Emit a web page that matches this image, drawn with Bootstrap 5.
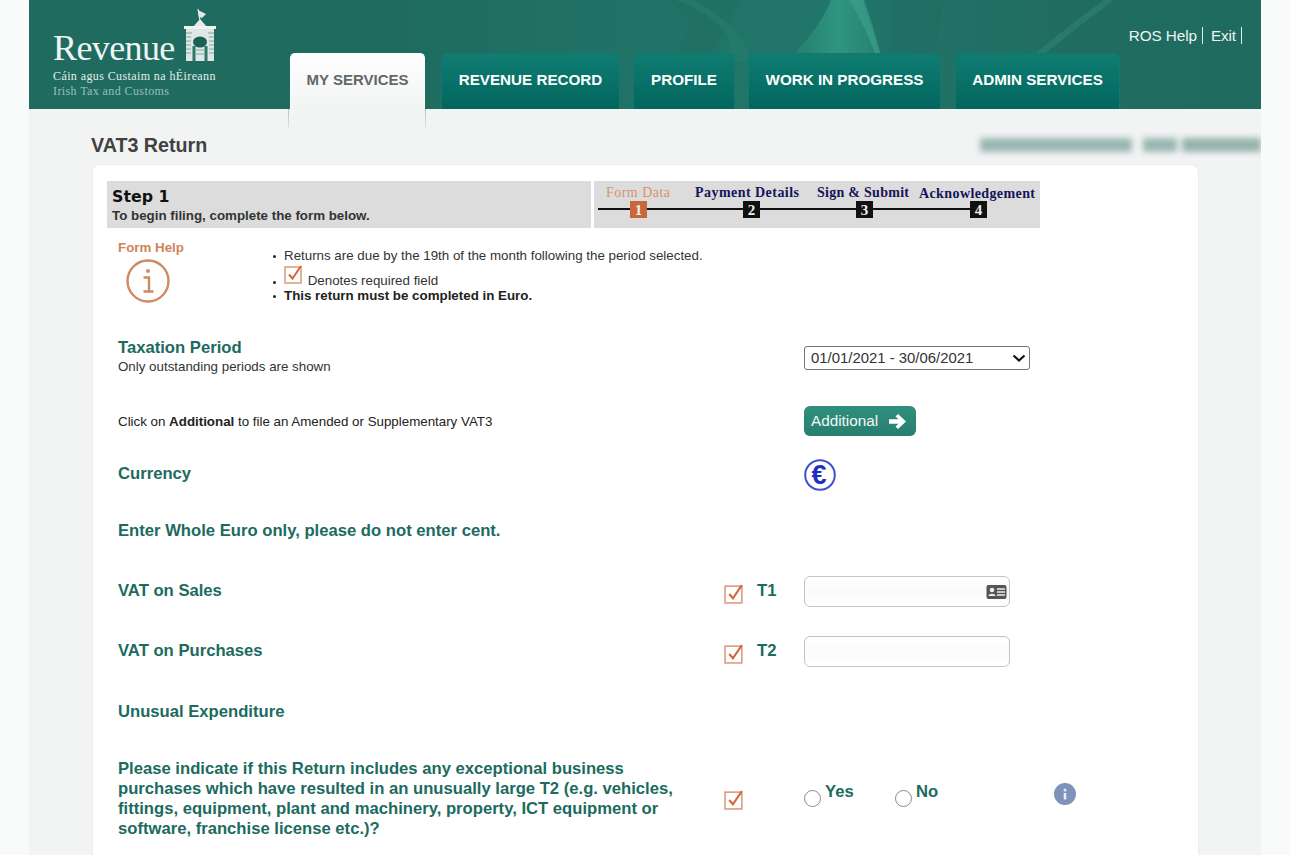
<!DOCTYPE html>
<html lang="en">
<head>
<meta charset="utf-8">
<title>VAT3 Return</title>
<link rel="stylesheet" href="https://cdn.jsdelivr.net/npm/bootstrap@5.3.0/dist/css/bootstrap.min.css">
<style>
html,body{height:855px;overflow:hidden}
body{background:#f9fafa;font-family:"Liberation Sans",Arial,sans-serif;color:#222}
.shell{margin-left:29px;width:1232px;height:855px;background:#f2f3f3;overflow:hidden}
.topbar{height:109px;background:linear-gradient(90deg,#1f6b60 0,#1f6b60 30%,#217367 50%,#22756a 65%,#216c61 85%,#1f6b60 100%);position:relative;overflow:hidden}
.swoosh{position:absolute;left:0;top:0;width:1232px;height:109px}
.brand{position:absolute;left:24px;top:9px;color:#fff;width:180px}
.brand-word{font-family:"Liberation Serif",serif;font-size:36px;line-height:1;position:absolute;left:0;top:21px;letter-spacing:-.6px;color:#eef4f2}
.brand-ga{font-family:"Liberation Serif",serif;font-size:12px;letter-spacing:.4px;position:absolute;left:0;top:58px;white-space:nowrap;color:#e4eeeb}
.brand-en{font-family:"Liberation Serif",serif;font-size:12px;letter-spacing:.4px;position:absolute;left:0;top:73px;white-space:nowrap;color:#9ebfb7}
.brand-arch{position:absolute;left:130px;top:0}
.tabs{position:absolute;left:261px;bottom:0;display:flex;height:56px}
.tabitem{background:linear-gradient(#0f7c72,#02665f);color:#fff;font-weight:700;font-size:15.2px;border-radius:5px 5px 0 0;display:flex;align-items:center;justify-content:center;padding-bottom:3px;border:1px solid #18766d;border-bottom:0;text-decoration:none}
.tabitem.on{background:linear-gradient(#fff,#f2f3f3);color:#62686a;border-color:#fff;font-size:15px}
.toolinks{position:absolute;right:19px;top:27px;color:#eef5f3;font-size:15.3px;display:flex;line-height:17px}
.toolinks span{border-right:1px solid #e8f0ee;padding-right:5px;margin-right:8px;letter-spacing:-.1px}
.toolinks span:last-child{margin-right:0;padding-right:5px}
.tabfoot{height:19px;margin-left:259px;width:138px;border-left:1px solid;border-right:1px solid;border-image:linear-gradient(#b9bbbb,#e2e3e3) 1}
.headline{height:36px;display:flex;justify-content:space-between;align-items:flex-start}
.headline h1{font-size:19.700px;font-weight:700;color:#414141;margin:5px 0 0 62px;line-height:24px}
.blurline{width:281px;height:14px;margin-top:10px;background:linear-gradient(90deg,#8fb1aa 0 54%,#f2f3f3 54% 58%,#8fb1aa 58% 70%,#f2f3f3 70% 72%,#8aaca5 72%);filter:blur(3px);opacity:.9;clip-path:inset(-6px 0 -6px -6px)}
.sheet{margin-left:63px;width:1107px;height:800px;background:#fff;border-radius:8px 8px 0 0;padding:16px 14px 0;border:1px solid #ececec;border-bottom:0}
.stepstrip{display:flex;gap:3px;height:47px;width:933px}
.stepleft{width:484px;background:#dcdcdc;padding:7px 5px 0;color:#111}
.steptitle{font-family:"DejaVu Sans",sans-serif;font-weight:700;font-size:15.800px;line-height:17px}
.stepnote{font-size:13.330px;font-weight:700;line-height:15px;color:#333;margin-top:3px;white-space:nowrap}
.stepright{width:446px;background:#dcdcdc}
.stepright svg{display:block}
.helpbox{display:flex;height:103px;padding-top:13px;padding-left:11px}
.helpcol{width:62px;color:#d0845c;font-weight:700;font-size:13.330px;line-height:14px;white-space:nowrap}
.helpcol svg{display:block;margin:4px 0 0 8px}
.helplist{margin:8px 0 0 92px;padding:0;list-style:none;font-size:13.330px;line-height:14px;color:#333;height:60px}
.helplist li{position:relative;padding-left:12px;white-space:nowrap}
.helplist li::before{content:"";position:absolute;left:1px;top:6px;width:3px;height:3px;border-radius:50%;background:#222}
.helplist li.markline::before{top:17px}
.helplist .strongline{font-weight:700;color:#222}
.reqicon{vertical-align:1px}
.fline{display:flex;align-items:center;padding-left:11px;position:relative}
.flabel{width:606px;color:#1c6b60;font-weight:700;font-size:16.650px;line-height:17px}
.fsub{font-size:13.330px;color:#333;font-weight:400;line-height:16px;display:block;margin-top:3px}
.fplain{font-size:13.330px;color:#222;font-weight:400}
.fcheck{width:33px;display:flex}
.fcheck.shifted{margin-top:6px}
.ftag{width:47px;color:#1c6b60;font-weight:700;font-size:16.650px;margin-top:2px}
.fslot{display:flex;align-items:center}
.selectbox{appearance:none;-webkit-appearance:none;width:226px;height:24px;padding:0 0 0 6px;border:1px solid #767676;border-radius:3px;font-size:14.900px;font-family:"Liberation Sans",Arial,sans-serif;color:#333;margin-top:2px;background:#fff url("data:image/svg+xml,%3Csvg xmlns='http://www.w3.org/2000/svg' width='14' height='8' viewBox='0 0 14 8'%3E%3Cpath d='M1.500 1.500L7 6.500l5.500-5' fill='none' stroke='%23111' stroke-width='2.200'/%3E%3C/svg%3E") no-repeat right 3px center}
.addbtn{width:112px;height:30px;background:linear-gradient(#308f7d,#267f6f);color:#f3f7f6;border:0;border-radius:6px;font-size:15.300px;padding:0 0 0 7px;display:flex;align-items:center;gap:11px}
.amtbox{width:206px;height:31px;border:1px solid #c4c4c4;border-radius:6px;background:linear-gradient(#fff,#fafafa 45%,#fff);position:relative;padding:0;margin-top:2px}
.amtbox input{width:100%;height:100%;border:0;background:transparent;outline:0}
.amtbox svg{position:absolute;right:1px;top:7px}
.optgroup{display:flex;align-items:flex-start;color:#1c6b60;font-weight:700;font-size:16.650px;position:relative;margin-top:-12px}
.optdot{width:17px;height:17px;border:1px solid #8a8a8a;border-radius:50%;background:#fff;margin:10px 4px 0 0}
.infodot{position:absolute;left:947px;top:46px}
.longq{width:560px;line-height:20px}
</style>
</head>
<body>
<div class="shell">
  <header class="topbar">
    <svg class="swoosh" viewBox="0 0 1232 109" aria-hidden="true">
      <defs>
        <linearGradient id="gs" x1="0" y1="0" x2="1" y2="0"><stop offset="0" stop-color="#23796a"/><stop offset=".55" stop-color="#2e9580"/><stop offset="1" stop-color="#28806f"/></linearGradient>
      </defs>
      <path d="M640 0 L710 0 C 700 25 690 45 680 56 L 640 56 C 660 40 670 20 640 0Z" fill="#20665c" opacity=".25"/>
      <path d="M802 0 L833 0 C 840 20 846 40 853 64 L 755 64 C 775 45 795 20 802 0Z" fill="url(#gs)"/>
      <path d="M820 0 L835 0 C 842 20 848 40 854 64 L 850 64 C 842 40 832 20 820 0Z" fill="#3aa08b" opacity=".7"/>
      <path d="M689 60 C 712 48 700 20 647 0 L 665 0 C 700 20 722 45 722 62Z" fill="#237a6b"/>
      <path d="M998 60 C 1025 38 1050 18 1075 0 L 1085 0 C 1055 22 1030 42 1008 60Z" fill="#2b8474" opacity=".6"/>
      <path d="M860 0 H 915 L 905 56 H 860Z" fill="#1f6359" opacity=".2"/>
    </svg>
    <div class="brand">
      <div class="brand-word">Revenue</div>
      <div class="brand-ga">Cáin agus Custaim na hÉireann</div>
      <div class="brand-en">Irish Tax and Customs</div>
      <svg class="brand-arch" width="34" height="54" viewBox="0 0 34 54" aria-hidden="true">
        <path d="M15 0l2 12" stroke="#dfe9e6" stroke-width="1.200" fill="none"/>
        <path d="M15 1l8 4-4 4-3-1z" fill="#dfe9e6"/>
        <path d="M10 18l7-8 7 8z" fill="#e6eeec"/>
        <path d="M1 17h32v3H1z" fill="#f0f5f4"/>
        <path d="M3 20h28v32H3z" fill="#dde8e5"/>
        <ellipse cx="17" cy="33" rx="7" ry="5.500" fill="#1c5f55"/>
        <path d="M9.500 37h3v15h-3zM21.500 37h3v15h-3z" fill="#2e7467"/>
        <path d="M3 24h6M25 24h6M3 28h5M26 28h5M3 32h5M26 32h5M3 36h5M26 36h5M3 40h5M26 40h5M3 44h5M26 44h5M13 41h8M13 45h8" stroke="#7ea79e" stroke-width="1"/>
      </svg>
    </div>
    <nav class="tabs">
      <a class="tabitem on" style="width:135px;margin-right:16px">MY SERVICES</a>
      <a class="tabitem" style="width:179px;margin-right:13px">REVENUE RECORD</a>
      <a class="tabitem" style="width:102px;margin-right:13px">PROFILE</a>
      <a class="tabitem" style="width:193px;margin-right:14px">WORK IN PROGRESS</a>
      <a class="tabitem" style="width:165px">ADMIN SERVICES</a>
    </nav>
    <div class="toolinks"><span>ROS Help</span><span>Exit</span></div>
  </header>
  <div class="tabfoot"></div>
  <div class="headline">
    <h1>VAT3 Return</h1>
    <div class="blurline"></div>
  </div>
  <main class="sheet">
    <div class="stepstrip">
      <div class="stepleft">
        <div class="steptitle">Step 1</div>
        <div class="stepnote">To begin filing, complete the form below.</div>
      </div>
      <div class="stepright">
        <svg width="446" height="47" viewBox="0 0 446 47">
          <path d="M4 28H386" stroke="#111" stroke-width="2"/>
          <rect x="36" y="20" width="17" height="17" fill="#c8683a"/>
          <rect x="149" y="20" width="17" height="17" fill="#111"/>
          <rect x="262" y="20" width="17" height="17" fill="#111"/>
          <rect x="376" y="20" width="17" height="17" fill="#111"/>
          <g font-family="Liberation Serif,serif" font-weight="700" font-size="15" text-anchor="middle" fill="#eee">
            <text x="44.500" y="33.500">1</text><text x="157.500" y="33.500">2</text><text x="270.500" y="33.500">3</text><text x="384.500" y="33.500">4</text>
          </g>
          <g font-family="Liberation Serif,serif" font-size="14" fill="#14145a" font-weight="700">
            <text x="12" y="16" fill="#d9926c" font-weight="400" textLength="64">Form Data</text>
            <text x="101" y="16" textLength="104">Payment Details</text>
            <text x="223" y="16" textLength="92">Sign &amp; Submit</text>
            <text x="325" y="17" textLength="116">Acknowledgement</text>
          </g>
        </svg>
      </div>
    </div>
    <div class="helpbox">
      <div class="helpcol">Form Help
        <svg width="44" height="44" viewBox="0 0 44 44" aria-hidden="true">
          <circle cx="22" cy="22" r="20.500" fill="none" stroke="#cf8a63" stroke-width="2.400"/>
          <circle cx="22" cy="12" r="2" fill="#cf8a63"/>
          <path d="M17.500 18.500h5.500v13.500M17.500 32.500h10" fill="none" stroke="#cf8a63" stroke-width="2.400"/>
        </svg>
      </div>
      <ul class="helplist">
        <li>Returns are due by the 19th of the month following the period selected.</li>
        <li class="markline" style="margin-top:1px">
          <svg class="reqicon" width="20" height="20" viewBox="0 0 20 20" aria-hidden="true"><use href="#reqmark"/></svg> Denotes required field
        </li>
        <li class="strongline" style="margin-top:1px">This return must be completed in Euro.</li>
      </ul>
    </div>

    <div class="fline" style="height:51px">
      <div class="flabel">Taxation Period<span class="fsub">Only outstanding periods are shown</span></div>
      <div class="fcheck"></div><div class="ftag"></div>
      <div class="fslot"><select class="selectbox"><option>01/01/2021 - 30/06/2021</option></select></div>
    </div>
    <div class="fline" style="height:65px;padding-top:13px">
      <div class="flabel fplain">Click on <b>Additional</b> to file an Amended or Supplementary VAT3</div>
      <div class="fcheck"></div><div class="ftag"></div>
      <div class="fslot"><button class="addbtn" type="button">Additional
        <svg width="17" height="15" viewBox="0 0 17 15" aria-hidden="true"><path d="M9 0l8 7.500-8 7.500-2.500-2.500 3-2.800H0V5.300h9.500l-3-2.800z" fill="#fff"/></svg></button></div>
    </div>
    <div class="fline" style="height:47px;padding-top:5px">
      <div class="flabel">Currency</div>
      <div class="fcheck"></div><div class="ftag"></div>
      <div class="fslot" style="margin-top:4px">
        <svg width="32" height="32" viewBox="0 0 32 32" aria-hidden="true">
          <circle cx="16" cy="16" r="14.800" fill="#fff" stroke="#3f4fd0" stroke-width="2"/>
          <text x="15" y="25" font-family="Liberation Sans,sans-serif" font-weight="700" font-size="27" text-anchor="middle" fill="#1c2ec4">€</text>
        </svg>
      </div>
    </div>
    <div class="fline" style="height:71px;padding-top:1px"><div class="flabel">Enter Whole Euro only, please do not enter cent.</div></div>
    <div class="fline" style="height:50px">
      <div class="flabel">VAT on Sales</div>
      <div class="fcheck shifted"><svg width="21" height="21" viewBox="0 0 20 20" aria-hidden="true"><use href="#reqmark"/></svg></div>
      <div class="ftag">T1</div>
      <div class="fslot"><div class="amtbox"><input type="text" aria-label="T1">
        <svg width="22" height="16" viewBox="0 0 22 16" aria-hidden="true"><rect x="0.500" y="1" width="20" height="14" rx="2" fill="#555"/><circle cx="6" cy="6" r="2.300" fill="#eee"/><path d="M2.500 12c0-3 7-3 7 0z" fill="#eee"/><path d="M11 5h8M11 8h8M11 11h8" stroke="#eee" stroke-width="1.300"/></svg></div></div>
    </div>
    <div class="fline" style="height:71px">
      <div class="flabel">VAT on Purchases</div>
      <div class="fcheck shifted"><svg width="21" height="21" viewBox="0 0 20 20" aria-hidden="true"><use href="#reqmark"/></svg></div>
      <div class="ftag">T2</div>
      <div class="fslot"><div class="amtbox"><input type="text" aria-label="T2"></div></div>
    </div>
    <div class="fline" style="height:51px"><div class="flabel">Unusual Expenditure</div></div>
    <div class="fline" style="height:102px;padding-top:22px">
      <div class="flabel"><div class="longq">Please indicate if this Return includes any exceptional business purchases which have resulted in an unusually large T2 (e.g. vehicles, fittings, equipment, plant and machinery, property, ICT equipment or software, franchise license etc.)?</div></div>
      <div class="fcheck"><svg width="21" height="21" viewBox="0 0 20 20" aria-hidden="true"><use href="#reqmark"/></svg></div>
      <div class="ftag"></div>
      <div class="optgroup" style="width:91px"><span class="optdot"></span>Yes</div>
      <div class="optgroup"><span class="optdot"></span>No</div>
      <svg class="infodot" width="22" height="22" viewBox="0 0 22 22" aria-hidden="true"><circle cx="11" cy="11" r="11" fill="#7d93ba"/><circle cx="11" cy="7" r="1.500" fill="#e8edf5"/><path d="M9.700 10h2.600v6.500H9.700z" fill="#e8edf5"/></svg>
    </div>
  </main>
</div>
<svg width="0" height="0" style="position:absolute" aria-hidden="true">
  <symbol id="reqmark" viewBox="0 0 20 20">
    <rect x="1" y="3" width="16" height="16" fill="#fff" stroke="#dc9a7c" stroke-width="1.500"/>
    <path d="M5 10.500l3.500 4L17 2" fill="none" stroke="#d2683c" stroke-width="2"/>
  </symbol>
</svg>
<script src="https://cdn.jsdelivr.net/npm/bootstrap@5.3.0/dist/js/bootstrap.bundle.min.js"></script>
</body>
</html>
